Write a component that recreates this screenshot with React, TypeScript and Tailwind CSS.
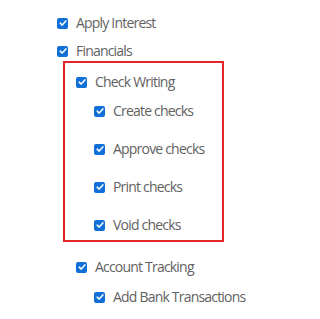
import React from "react";

const Check = () => (
  <span className="flex h-[11px] w-[11px] shrink-0 items-center justify-center rounded-[2px] bg-[#1170d8]">
    <svg viewBox="0 0 10 10" className="h-[8px] w-[8px]" fill="none">
      <path d="M1.5 5.2 L4 7.6 L8.6 2.4" stroke="#fff" strokeWidth="1.9" strokeLinecap="round" strokeLinejoin="round" />
    </svg>
  </span>
);

const Row = ({ label, className = "" }: { label: string; className?: string }) => (
  <div className={`flex h-[20px] items-center ${className}`}>
    <Check />
    <span className="ml-[8px] text-[14px] leading-none tracking-[-0.8px] text-[#626262]">{label}</span>
  </div>
);

export default function App() {
  return (
    <div className="h-[319px] w-[304px] bg-white pt-[13px] font-['Open_Sans',sans-serif]">
      <Row label="Apply Interest" className="ml-[57px]" />
      <Row label="Financials" className="ml-[57px] mt-[8px]" />
      <div className="ml-[63px] w-[161px] border-2 border-[#e4242b] pb-[5px] pl-[11px]">
        <Row label="Check Writing" className="mt-[9px]" />
        <div className="ml-[18px]">
          <Row label="Create checks" className="mt-[9px]" />
          <Row label="Approve checks" className="mt-[18px]" />
          <Row label="Print checks" className="mt-[18px]" />
          <Row label="Void checks" className="mt-[18px]" />
        </div>
      </div>
      <Row label="Account Tracking" className="ml-[76px] mt-[15px]" />
      <Row label="Add Bank Transactions" className="ml-[94px] mt-[10px]" />
    </div>
  );
}
